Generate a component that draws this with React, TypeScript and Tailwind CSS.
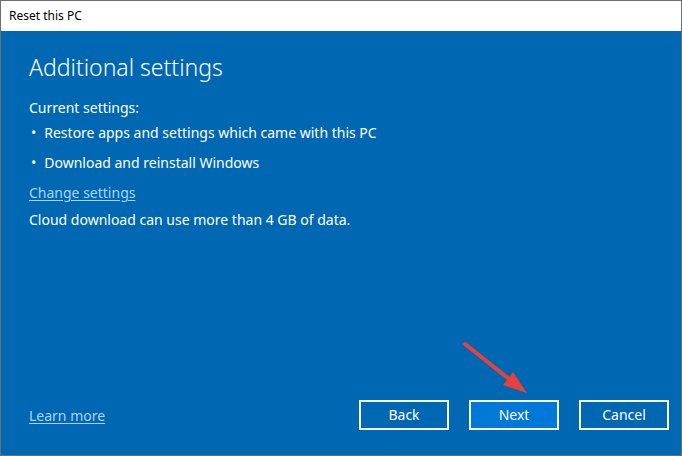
import React from "react";

const font = { fontFamily: '"Noto Sans", "Open Sans", sans-serif' };

const DialogButton = ({ label, primary }: { label: string; primary?: boolean }) => (
  <button
    className={
      "w-[90px] h-[30px] border-2 border-white text-[14px] text-white leading-none " +
      (primary ? "bg-[#0078d7]" : "bg-transparent")
    }
  >
    {label}
  </button>
);

const App = () => {
  return (
    <div
      className="relative w-[682px] h-[456px] flex flex-col border border-[#6f6f6f] bg-white overflow-hidden"
      style={font}
    >
      <div className="h-[30px] flex items-center pl-[8px] text-[12px] text-black bg-white">
        Reset this PC
      </div>
      <div className="flex-1 flex flex-col bg-[#0067b3] text-white px-[28px] pt-[20px] pb-[25px]">
        <h1 className="text-[23px] font-light leading-[32px]">Additional settings</h1>
        <p className="mt-[15px] text-[14px] leading-[20px]">Current settings:</p>
        <ul className="text-[14px] leading-[20px]">
          <li className="mt-[5px] flex gap-[8px] pl-[2px]">
            <span>•</span>
            <span>Restore apps and settings which came with this PC</span>
          </li>
          <li className="mt-[10px] flex gap-[8px] pl-[2px]">
            <span>•</span>
            <span>Download and reinstall Windows</span>
          </li>
        </ul>
        <a className="mt-[10px] text-[14px] leading-[20px] text-[#a8d3f7] underline underline-offset-2 self-start">
          Change settings
        </a>
        <p className="mt-[7px] text-[14px] leading-[20px]">
          Cloud download can use more than 4 GB of data.
        </p>
        <div className="mt-auto flex items-center justify-between">
          <a className="text-[14px] text-[#a8d3f7] underline underline-offset-2">Learn more</a>
          <div className="flex gap-[20px] mr-[-16px]">
            <DialogButton label="Back" />
            <DialogButton label="Next" primary />
            <DialogButton label="Cancel" />
          </div>
        </div>
      </div>
      <svg
        className="absolute left-[455px] top-[335px]"
        width="80"
        height="65"
        viewBox="455 335 80 65"
      >
        <line x1="464" y1="343" x2="508" y2="378" stroke="#e8413b" strokeWidth="4" strokeLinecap="round" />
        <polygon points="526,392 502,384 512,371" fill="#e8413b" />
      </svg>
    </div>
  );
};

export default App;
